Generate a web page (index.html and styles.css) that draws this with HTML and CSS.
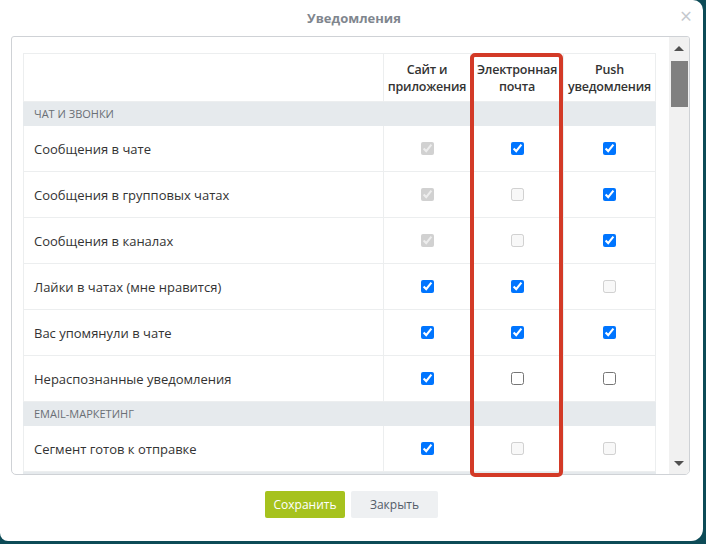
FILE: index.html
```html
<!DOCTYPE html>
<html lang="ru">
<head>
    <meta charset="UTF-8">
    <meta name="viewport" content="width=device-width, initial-scale=1.0">
    <title>Уведомления</title>
    <link rel="stylesheet" href="styles.css">
</head>
<body>
    <div class="modal">
        <div class="modal-head">
            <span class="modal-title">Уведомления</span>
            <span class="modal-close">&times;</span>
        </div>

        <div class="scroll-box">
            <div class="scroll-content">
                <table class="notify-table">
                    <colgroup>
                        <col class="w-label">
                        <col class="w-site">
                        <col class="w-mail">
                        <col class="w-push">
                    </colgroup>
                    <thead>
                        <tr>
                            <th class="col-label"></th>
                            <th>Сайт и<br>приложения</th>
                            <th>Электронная<br>почта</th>
                            <th>Push<br>уведомления</th>
                        </tr>
                    </thead>
                    <tbody>
                        <tr class="section"><td colspan="4">Чат и звонки</td></tr>
                        <tr>
                            <td class="col-label">Сообщения в чате</td>
                            <td><input type="checkbox" checked disabled></td>
                            <td><input type="checkbox" checked></td>
                            <td><input type="checkbox" checked></td>
                        </tr>
                        <tr>
                            <td class="col-label">Сообщения в групповых чатах</td>
                            <td><input type="checkbox" checked disabled></td>
                            <td><input type="checkbox" disabled></td>
                            <td><input type="checkbox" checked></td>
                        </tr>
                        <tr>
                            <td class="col-label">Сообщения в каналах</td>
                            <td><input type="checkbox" checked disabled></td>
                            <td><input type="checkbox" disabled></td>
                            <td><input type="checkbox" checked></td>
                        </tr>
                        <tr>
                            <td class="col-label">Лайки в чатах (мне нравится)</td>
                            <td><input type="checkbox" checked></td>
                            <td><input type="checkbox" checked></td>
                            <td><input type="checkbox" disabled></td>
                        </tr>
                        <tr>
                            <td class="col-label">Вас упомянули в чате</td>
                            <td><input type="checkbox" checked></td>
                            <td><input type="checkbox" checked></td>
                            <td><input type="checkbox" checked></td>
                        </tr>
                        <tr>
                            <td class="col-label">Нераспознанные уведомления</td>
                            <td><input type="checkbox" checked></td>
                            <td><input type="checkbox"></td>
                            <td><input type="checkbox"></td>
                        </tr>
                        <tr class="section"><td colspan="4">Email-маркетинг</td></tr>
                        <tr>
                            <td class="col-label">Сегмент готов к отправке</td>
                            <td><input type="checkbox" checked></td>
                            <td><input type="checkbox" disabled></td>
                            <td><input type="checkbox" disabled></td>
                        </tr>
                        <tr class="section"><td colspan="4">&nbsp;</td></tr>
                    </tbody>
                </table>
            </div>
            <div class="scrollbar">
                <div class="scroll-arrow up"></div>
                <div class="scroll-track"><div class="scroll-thumb"></div></div>
                <div class="scroll-arrow down"></div>
            </div>
        </div>

        <div class="modal-foot">
            <button class="btn btn-save">Сохранить</button>
            <button class="btn btn-close">Закрыть</button>
        </div>

        <!-- highlight over the email column -->
        <div class="highlight"></div>
    </div>
</body>
</html>
```

FILE: styles.css
```css
* {
    margin: 0;
    padding: 0;
    box-sizing: border-box;
}

body {
    font-family: "Open Sans", Arial, sans-serif;
    background-color: #0d4b57;
    color: #333;
    width: 706px;
    height: 544px;
    overflow: hidden;
}

.modal {
    position: relative;
    width: 703px;
    height: 541px;
    background-color: #fff;
    border-radius: 0 10px 12px 8px;
    display: flex;
    flex-direction: column;
}

.modal-head {
    position: relative;
    height: 36px;
    display: flex;
    justify-content: center;
    align-items: center;
}

.modal-title {
    font-size: 13px;
    font-weight: bold;
    color: #80868e;
    margin-left: 5px;
}

.modal-close {
    position: absolute;
    right: 11px;
    top: 6px;
    font-size: 21px;
    line-height: 21px;
    color: #c4c8ce;
}

.scroll-box {
    display: flex;
    height: 439px;
    margin: 0 13px 0 11px;
    border: 1px solid #cfd2d6;
    border-radius: 3px 3px 5px 5px;
    overflow: hidden;
}

.scroll-content {
    flex: 1;
    overflow: hidden;
    padding: 16px 14px 0 11px;
}

.notify-table {
    width: 632px;
    table-layout: fixed;
    border-collapse: collapse;
    font-size: 13px;
}

.w-label { width: 360px; }
.w-site { width: 87px; }
.w-mail { width: 93px; }
.w-push { width: 92px; }

.notify-table th,
.notify-table td {
    border: 1px solid #eceeef;
    text-align: center;
    vertical-align: middle;
}

.notify-table th {
    height: 48px;
    font-size: 12.5px;
    font-weight: 600;
    line-height: 17px;
    letter-spacing: -0.2px;
    color: #333;
    white-space: nowrap;
}

.notify-table td {
    height: 46px;
}

.notify-table .col-label {
    text-align: left;
    padding-left: 10px;
}

.notify-table tr.section td {
    height: 24px;
    background-color: #e6eaed;
    border-color: #e6eaed;
    text-align: left;
    padding-left: 10px;
    font-size: 11px;
    text-transform: uppercase;
    color: #6a6f75;
}

.notify-table input[type="checkbox"] {
    display: block;
    margin: 0 auto;
    width: 13px;
    height: 13px;
}

.scrollbar {
    width: 20px;
    background-color: #f1f1f1;
    display: flex;
    flex-direction: column;
    align-items: center;
}

.scroll-arrow {
    width: 0;
    height: 0;
    border-left: 5px solid transparent;
    border-right: 5px solid transparent;
}

.scroll-arrow.up {
    margin: 9px 0 10px;
    border-bottom: 5px solid #505050;
}

.scroll-arrow.down {
    margin: 6px 0 8px;
    border-top: 5px solid #505050;
}

.scroll-track {
    flex: 1;
    width: 100%;
    padding: 0 1px 0 2px;
}

.scroll-thumb {
    height: 46px;
    background-color: #808080;
}

.modal-foot {
    display: flex;
    justify-content: center;
    gap: 6px;
    padding: 16px 0 0 0;
}

.btn {
    font-family: "Open Sans", Arial, sans-serif;
    font-size: 12px;
    height: 27px;
    border: none;
    border-radius: 2px;
    cursor: pointer;
}

.btn-save {
    width: 80px;
    background-color: #a6c21e;
    color: #fff;
}

.btn-close {
    width: 87px;
    background-color: #eef0f2;
    color: #535c69;
}

.highlight {
    position: absolute;
    left: 470px;
    top: 53px;
    width: 93px;
    height: 424px;
    border: 4px solid #d33a27;
    border-radius: 5px;
    pointer-events: none;
}
```
